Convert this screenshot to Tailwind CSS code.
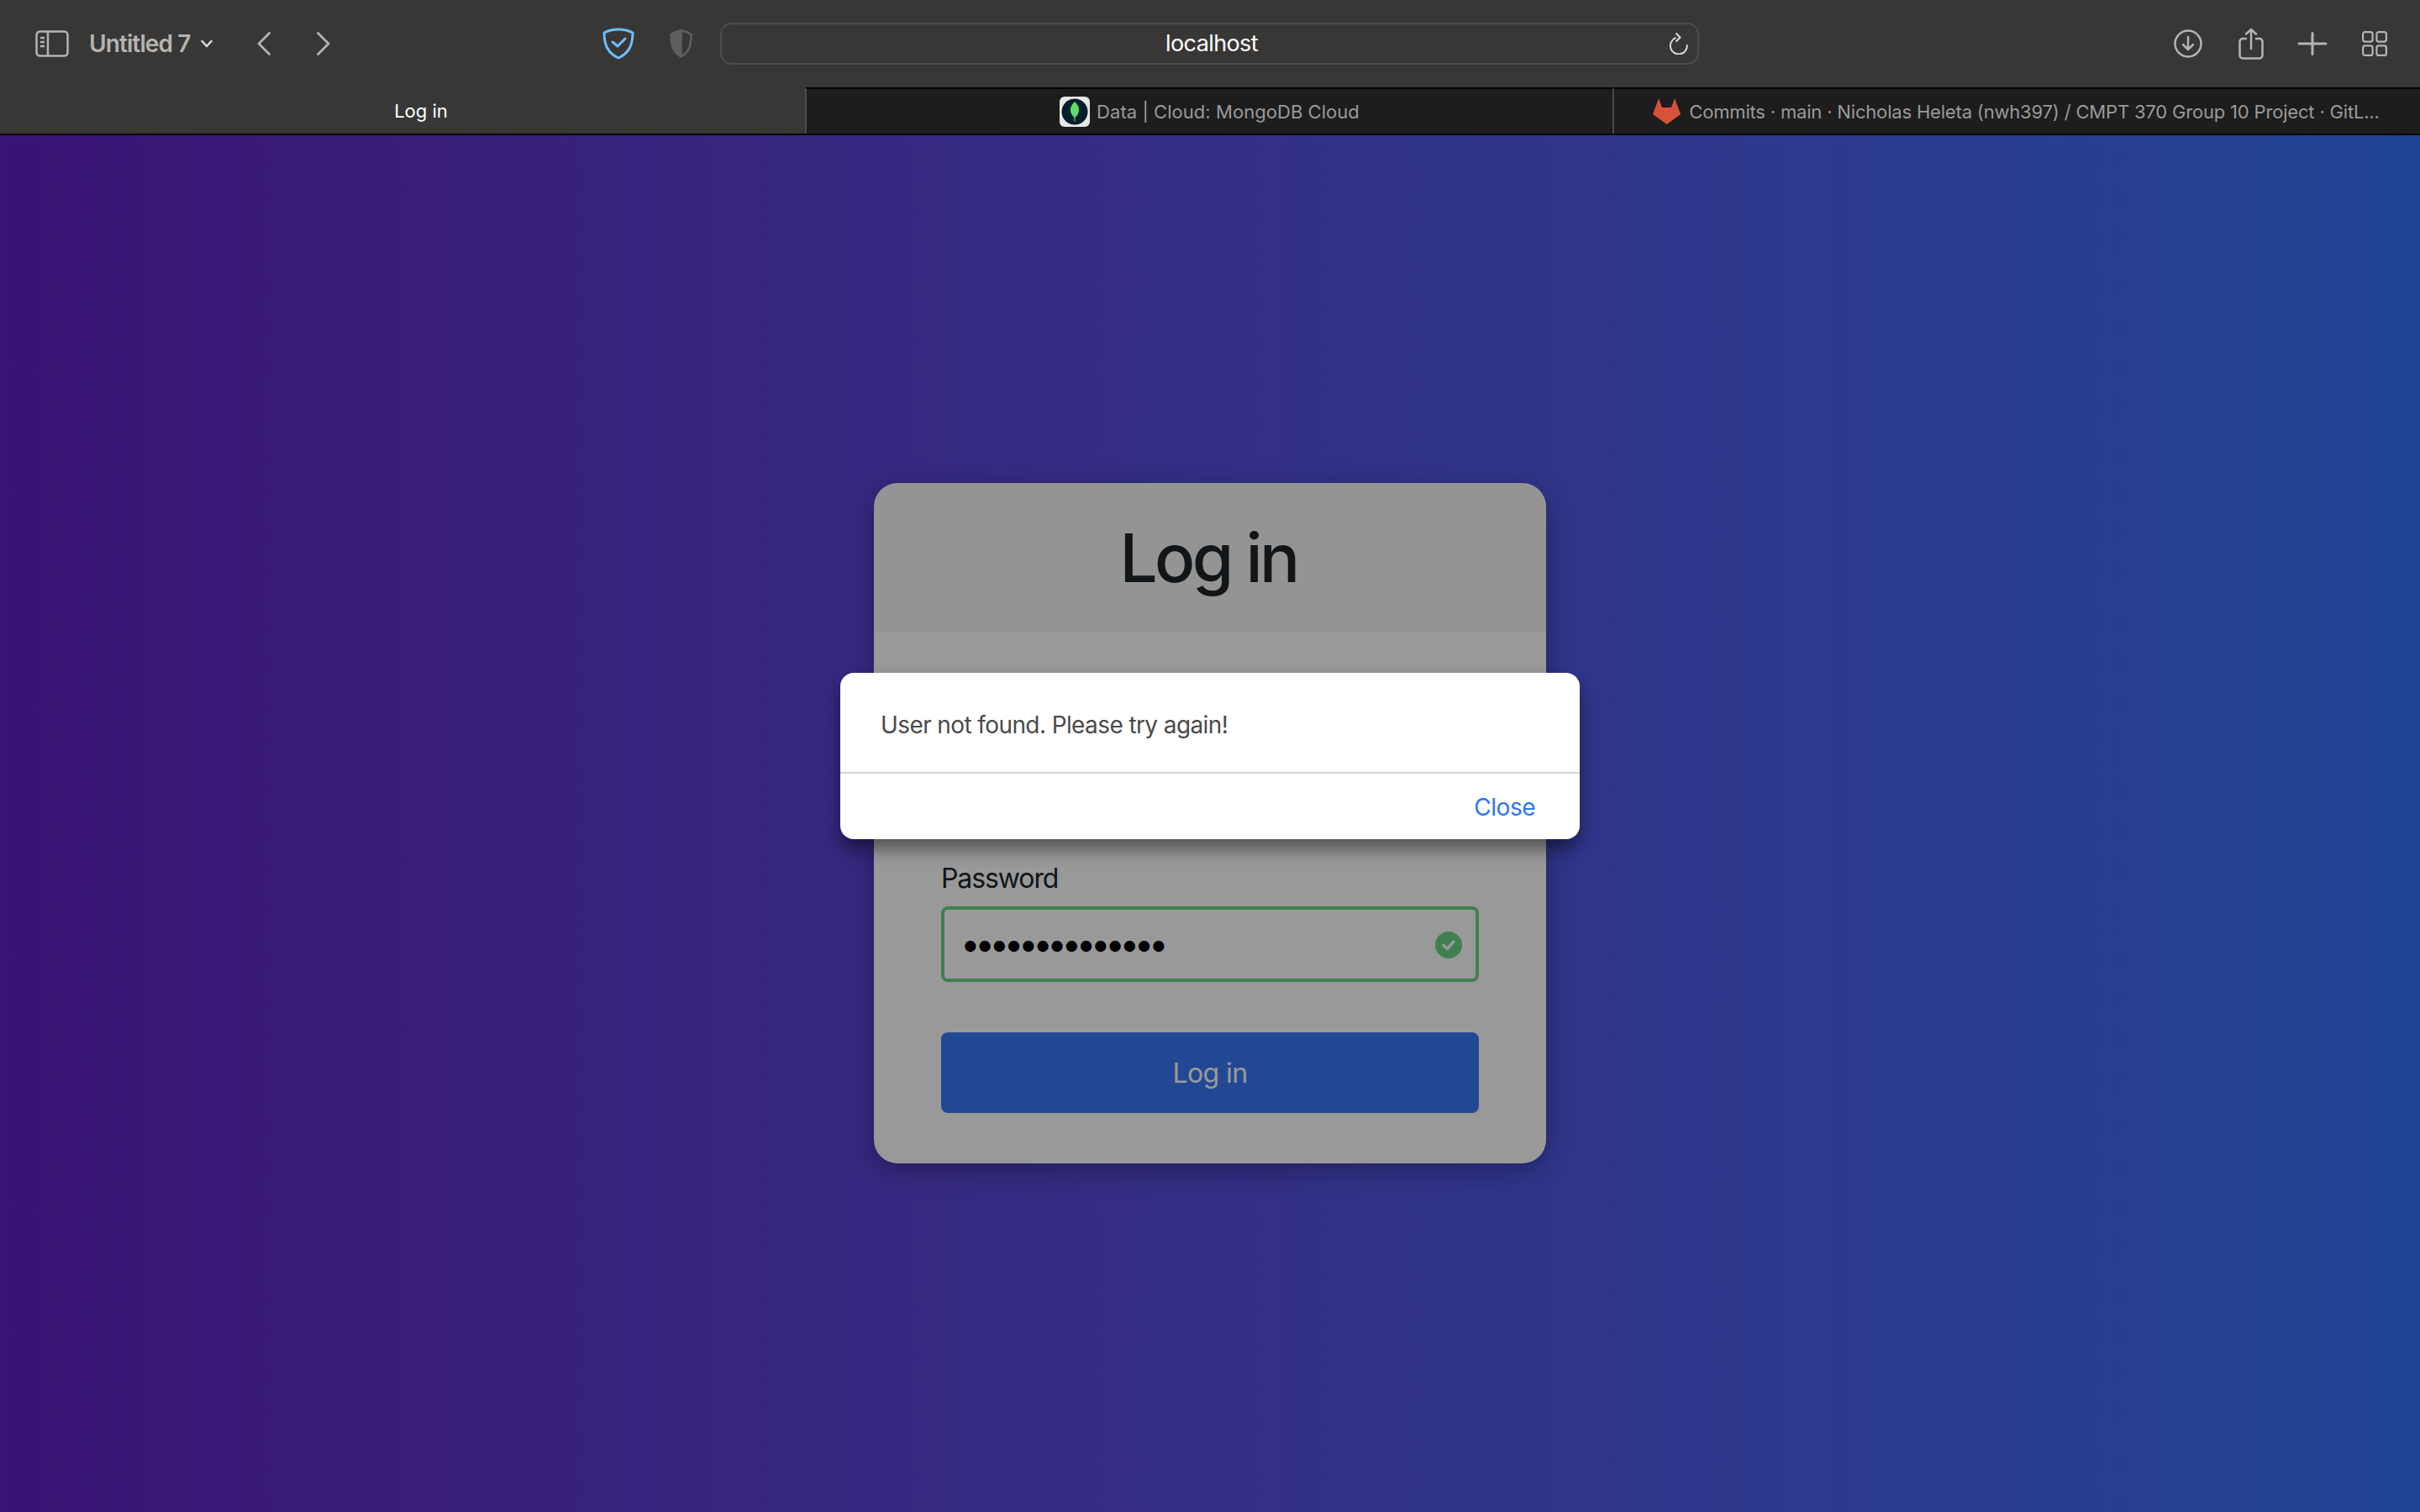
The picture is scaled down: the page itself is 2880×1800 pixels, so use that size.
<!DOCTYPE html>
<html lang="en">
<head>
  <meta charset="UTF-8" />
  <meta name="viewport" content="width=device-width, initial-scale=1.0" />
  <title>Log in</title>
  <script src="https://cdn.jsdelivr.net/npm/@tailwindcss/browser@4"></script>
</head>
<body class="w-[2880px] h-[1800px] overflow-hidden flex flex-col bg-black font-['Inter',sans-serif]">

  <!-- Browser toolbar -->
  <div class="h-[104px] shrink-0 flex items-center bg-[#383735] text-[#b5b4b2]">
    <svg class="ml-[42px] w-[40px] h-[32px]" viewBox="0 0 40 32" fill="none" stroke="currentColor" stroke-width="2.5">
      <rect x="1.5" y="1.5" width="37" height="29" rx="4" />
      <path d="M15 2v28M6 9h5M6 14h5M6 19h5" />
    </svg>
    <span class="ml-[24px] w-[122px] text-[28px] leading-none font-semibold tracking-[-0.9px] whitespace-nowrap pb-[1px]">Untitled 7</span>
    <svg class="ml-[11px] w-[14px] h-[10px]" viewBox="0 0 14 10" fill="none" stroke="#dddcda" stroke-width="2.5" stroke-linecap="round" stroke-linejoin="round">
      <path d="M1.5 2 7 8l5.500-6" />
    </svg>
    <svg class="ml-[53px] w-[16px] h-[28px]" viewBox="0 0 16 28" fill="none" stroke="currentColor" stroke-width="2.800" stroke-linecap="round" stroke-linejoin="round">
      <path d="M14.500 1.500 2 14l12.500 12.500" />
    </svg>
    <svg class="ml-[55px] w-[16px] h-[28px]" viewBox="0 0 16 28" fill="none" stroke="currentColor" stroke-width="2.800" stroke-linecap="round" stroke-linejoin="round">
      <path d="M1.500 1.500 14 14 1.500 26.500" />
    </svg>
    <svg class="ml-[324px] w-[38px] h-[38px]" viewBox="0 0 38 38" fill="none" stroke="#6cbffa" stroke-width="3" stroke-linecap="round" stroke-linejoin="round">
      <path d="M19 2C12 2 6.500 3.500 2 6c0 14 4 24 17 30C32 30 36 20 36 6 31.500 3.500 26 2 19 2Z" />
      <path d="m12 17 6 5 9-9" />
    </svg>
    <svg class="ml-[42px] w-[27px] h-[34px]" viewBox="0 0 27 34" fill="none">
      <path d="M13.500 1.500C9 2 5 3.500 1.500 6c0 13 2 21 12 26.500Z" fill="#5f5e5d" stroke="#5f5e5d" stroke-width="2.500" stroke-linejoin="round" />
      <path d="M13.500 1.500c4.500.5 8.500 2 12 4.500 0 13-2 21-12 26.500" stroke="#5f5e5d" stroke-width="2.500" stroke-linejoin="round" />
    </svg>

    <!-- Address bar -->
    <div class="ml-[33px] w-[1165px] h-[50px] rounded-[14px] border-2 border-[#4d4c4a] flex items-center pr-[11px]">
      <span class="flex-1 pl-[38px] pb-[2px] text-center text-white text-[27px] leading-none tracking-[-0.6px]">localhost</span>
      <svg class="w-[22px] h-[26px]" viewBox="0 0 22 26" fill="none" stroke="#dddcda" stroke-width="2" stroke-linecap="round" stroke-linejoin="round">
        <path d="M7 6.200A10 10 0 1 0 20.800 15" />
        <path d="m8 1 4.500 4.500L8 10" />
      </svg>
    </div>

    <svg class="ml-[565px] w-[34px] h-[34px]" viewBox="0 0 34 34" fill="none" stroke="currentColor" stroke-width="2.500" stroke-linecap="round" stroke-linejoin="round">
      <circle cx="17" cy="17" r="15.500" />
      <path d="M17 9v15M11 18l6 6 6-6" />
    </svg>
    <svg class="ml-[43px] w-[30px] h-[38px]" viewBox="0 0 30 38" fill="none" stroke="currentColor" stroke-width="2.500" stroke-linecap="round" stroke-linejoin="round">
      <path d="M9 13H5a3.500 3.500 0 0 0-3.500 3.500V33A3.500 3.500 0 0 0 5 36.500h20a3.500 3.500 0 0 0 3.500-3.500V16.500A3.500 3.500 0 0 0 25 13h-4" />
      <path d="M15 25V2M9 7.500 15 2l6 5.500" />
    </svg>
    <svg class="ml-[40px] w-[36px] h-[28px]" viewBox="0 0 36 28" fill="none" stroke="currentColor" stroke-width="3" stroke-linecap="round">
      <path d="M18 1.500v25M2 14h32" />
    </svg>
    <svg class="ml-[41px] w-[30px] h-[30px]" viewBox="0 0 30 30" fill="none" stroke="currentColor" stroke-width="2.200">
      <rect x="1.100" y="1.100" width="11.500" height="11.500" rx="2.500" />
      <rect x="17.400" y="1.100" width="11.500" height="11.500" rx="2.500" />
      <rect x="1.100" y="17.400" width="11.500" height="11.500" rx="2.500" />
      <rect x="17.400" y="17.400" width="11.500" height="11.500" rx="2.500" />
    </svg>
  </div>

  <!-- Tabs -->
  <div class="h-[57px] shrink-0 flex border-b-2 border-black text-[22px] leading-none">
    <div class="w-[958px] bg-[#383735] text-white flex items-center justify-center pl-[44px]">Log in</div>
    <div class="w-[961px] bg-[#1d1d1d] text-[#9a9a9a] border-t-2 border-l-2 border-t-black border-l-[#4a4a4a] flex items-center justify-center gap-[8px]">
      <svg class="w-[36px] h-[36px]" viewBox="0 0 36 36">
        <rect width="36" height="36" rx="6" fill="#e8e8e6" />
        <circle cx="18" cy="18" r="15.500" fill="#061e2b" />
        <path d="M18 6c4 3.500 5.500 7.500 5 11-.4 3.500-2.500 6-4.300 7.500L18.400 30h-.8l-.3-5.500C15.500 23 13.400 20.500 13 17c-.5-3.500 1-7.500 5-11Z" fill="#5fdc6b" />
      </svg>
      <span class="tracking-[0.05px]">Data | Cloud: MongoDB Cloud</span>
    </div>
    <div class="flex-1 bg-[#1d1d1d] text-[#9a9a9a] border-t-2 border-l-2 border-t-black border-l-[#4a4a4a] flex items-center justify-center gap-[10px] pr-[2px]">
      <svg class="w-[33px] h-[31px]" viewBox="0 0 33 31">
        <path d="M7 0l4 11h11l4-11 7 19-16.500 12L0 19Z" fill="#d8523a" />
      </svg>
      <span class="tracking-[-0.18px]">Commits · main · Nicholas Heleta (nwh397) / CMPT 370 Group 10 Project · GitL...</span>
    </div>
  </div>

  <!-- Page -->
  <main class="relative flex-1 flex justify-center pt-[414px] bg-gradient-to-r from-[#6120c1] to-[#3773fa]">
    <div class="w-[800px] h-[810px] rounded-[28px] bg-white overflow-hidden shadow-[0_8px_32px_rgba(0,0,0,0.3)] text-[#212529]">
      <div class="h-[178px] bg-black/[0.03] flex items-center justify-center pr-[4px]">
        <h1 class="text-[80px] leading-none font-medium tracking-[-3.600px]">Log in</h1>
      </div>
      <form class="px-[80px] pt-[62px] pb-[60px] space-y-[60px]">
        <!-- email field sits behind the alert, nothing of it shows -->
        <div class="h-[147px]"></div>
        <div>
          <label class="block h-[48px] mb-[9px] text-[32px] leading-[48px] tracking-[-1.100px]">Password</label>
          <div class="h-[90px] rounded-[8px] border-4 border-[#6bd585] flex items-center pl-[19px] pr-[16px]">
            <input type="password" value="aaaaaaaaaaaaaa" class="flex-1 min-w-0 mb-[2px] text-[42px] tracking-[-6.400px] text-black outline-none bg-transparent" />
            <svg class="w-[32px] h-[32px] mt-[2px]" viewBox="0 0 32 32">
              <circle cx="16" cy="16" r="16" fill="#6bd585" />
              <path d="m10 16.500 4.500 4L22 12" fill="none" stroke="#fff" stroke-width="3.500" stroke-linecap="round" stroke-linejoin="round" />
            </svg>
          </div>
        </div>
        <button type="button" class="block w-full h-[96px] pt-[2px] rounded-[8px] bg-[#3a78f7] text-white text-[32px] tracking-[-0.600px]">Log in</button>
      </form>
    </div>

    <!-- Backdrop and alert -->
    <div class="absolute inset-0 bg-black/40"></div>
    <div class="absolute top-[640px] left-[1000px] w-[880px] h-[198px] rounded-[16px] bg-white shadow-[0_12px_20px_rgba(0,0,0,0.45)] flex flex-col">
      <div class="h-[118px] shrink-0 flex items-center pl-[48px] pt-[6px] text-[28px] tracking-[-0.6px] text-[#4a4a4a]">User not found. Please try again!</div>
      <div class="flex-1 border-t-2 border-[#d4d4d4] flex items-center justify-end pr-[53px] pt-[2px]">
        <button type="button" class="text-[28px] tracking-[-0.5px] text-[#2f76f2]">Close</button>
      </div>
    </div>
  </main>

</body>
</html>
